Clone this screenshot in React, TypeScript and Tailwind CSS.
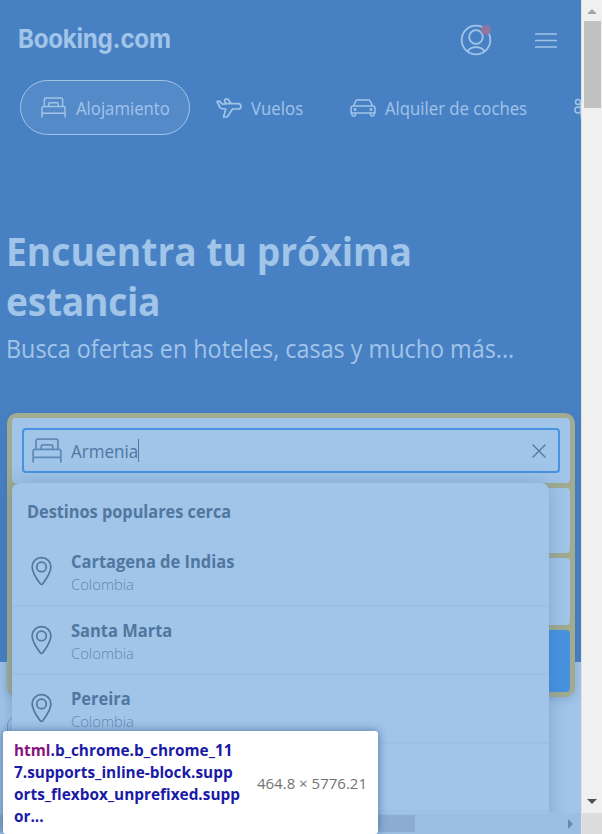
import React from "react";

const stroke = {
  fill: "none",
  stroke: "currentColor",
  strokeWidth: 1.5,
  strokeLinecap: "round" as const,
  strokeLinejoin: "round" as const,
};

function BedIcon({ className }: { className: string }) {
  return (
    <svg viewBox="0 0 26 22" preserveAspectRatio="none" className={className} {...stroke}>
      <path d="M1 21v-9.5Q1 10 2.500 10h21Q25 10 25 11.500V21M1 17h24M3.500 10V2.500Q3.500 1 5 1h16Q22.500 1 22.500 2.500V10M8 10V7.500Q8 6 9.500 6h7Q18 6 18 7.500V10" />
    </svg>
  );
}

function PlaneIcon() {
  return (
    <svg viewBox="0 0 26 20" className="h-5 w-[26px] shrink-0" {...stroke} strokeWidth={1.7}>
      <path d="M1 3.500l2-.5 3.500 3.200 5.200-.5H22q3 .2 3 2.800 0 2.500-3 2.500h-5.500l-4.800 7.200q-.5.8-1.500.8H7.500l2.300-8-3.600-.3Q5 10.500 4 9.500ZM9.500 5.700 8.700 2.500q-.2-1.300 1-1.300h1.600q.8 0 1.300.7l2.600 3.800" />
    </svg>
  );
}

function CarIcon() {
  return (
    <svg viewBox="0 0 26 18" className="h-[18px] w-[26px] shrink-0" {...stroke}>
      <path d="M3.500 7 5.800 2Q6.300 1 7.500 1h11q1.200 0 1.700 1l2.300 5M3.500 7h19q2.500 0 2.500 2.500V14H1V9.500Q1 7 3.500 7ZM2 14v2q0 1 1.700 1t1.700-1v-2M20.600 14v2q0 1 1.700 1t1.700-1v-2" />
      <circle cx="5" cy="10.500" r=".7" />
      <circle cx="21" cy="10.500" r=".7" />
    </svg>
  );
}

function PinIcon() {
  return (
    <svg viewBox="0 0 22 30" className="mt-[7px] h-[30px] w-[21px] shrink-0" {...stroke} strokeWidth={1.8}>
      <path d="M11 1C5.300 1 1.200 5.400 1.200 10.700c0 5.300 5.300 13.300 8.300 17.400q1.500 1.800 3 0c3-4.100 8.300-12.100 8.300-17.400C20.800 5.400 16.700 1 11 1Z" />
      <circle cx="11" cy="10.700" r="5" />
    </svg>
  );
}

const places = ["Cartagena de Indias", "Santa Marta", "Pereira"];

function Header() {
  return (
    <header className="flex h-20 items-start justify-between pr-6 pl-[18px]">
      <div className="mt-[21px] w-[151px] origin-left scale-x-[.93] font-[Inter] text-[26px] leading-9 font-bold tracking-[-0.3px]">
        Booking.com
      </div>
      <div className="mt-6 flex items-center gap-[43px]">
        <svg viewBox="0 0 32 32" className="h-8 w-8" {...stroke} strokeWidth={1.8}>
          <circle cx="16" cy="16" r="14.300" />
          <circle cx="16" cy="13" r="6.800" />
          <path d="M7.500 27.200c4-5.500 13-5.500 17 0" />
          <circle cx="26" cy="6" r="5" fill="#91759f" stroke="none" />
        </svg>
        <svg viewBox="0 0 22 16" className="h-4 w-[22px]" {...stroke} strokeWidth={1.3}>
          <path d="M.5 2h21M.5 8.500h21M.5 15h21" />
        </svg>
      </div>
    </header>
  );
}

function Tabs() {
  return (
    <nav className="flex h-[55px] items-center overflow-hidden pl-5 text-[18px] whitespace-nowrap">
      <div className="flex h-[55px] w-[170px] shrink-0 items-center rounded-full border border-[#a1c4e9] bg-[#558ac9] pl-5">
        <BedIcon className="h-[21px] w-[25px] shrink-0" />
        <span className="mt-0.5 ml-[10px] origin-left scale-x-[.93]">Alojamiento</span>
      </div>
      <div className="ml-[26px] flex w-[134px] shrink-0 items-center">
        <PlaneIcon />
        <span className="mt-0.5 ml-[9px] origin-left scale-x-[.935]">Vuelos</span>
      </div>
      <div className="flex w-[224px] shrink-0 items-center">
        <CarIcon />
        <span className="mt-0.5 ml-[9px] origin-left scale-x-[.93]">Alquiler de coches</span>
      </div>
      <svg viewBox="0 0 26 22" className="h-[22px] w-[26px] shrink-0" {...stroke}>
        <circle cx="4" cy="5" r="2.500" />
        <circle cx="4" cy="13" r="3" />
        <circle cx="12" cy="9" r="5.500" />
        <path d="M7 16v3M7 21v.1" />
      </svg>
    </nav>
  );
}

function Suggestions() {
  return (
    <section className="absolute top-[70px] left-[5px] z-10 h-[350px] w-[537px] rounded-t-lg bg-[#a1c4e9] text-[#4f779f] shadow-[0_0_18px_rgba(53,95,145,0.32)]">
      <h2 className="flex h-[55px] items-center pt-0.5 pl-[15px] text-[18px] font-bold whitespace-nowrap">
        <span className="origin-left scale-x-[.905]">Destinos populares cerca</span>
      </h2>
      {places.map((place) => (
        <div key={place} className="flex h-[68.500px] border-b-2 border-[#9cbfe4] pt-[11px] pl-[19px]">
          <PinIcon />
          <div className="ml-[19px]">
            <div className="flex h-6 text-[18px] leading-6 font-bold whitespace-nowrap">
              <span className="origin-left scale-x-[.915]">{place}</span>
            </div>
            <div className="text-[14.800px] leading-[23px] font-light text-[#5f86b0]">Colombia</div>
          </div>
        </div>
      ))}
      <div className="h-[68px] border-b-2 border-[#9cbfe4]" />
    </section>
  );
}

function SearchForm() {
  return (
    <div className="relative mt-[46px] ml-[7px] flex h-[284px] w-[568px] flex-col gap-[5px] rounded-[10px] bg-[#a0ab90] p-[5px] shadow-[0_2px_8px_rgba(53,95,145,0.25)]">
      <div className="h-[65px] rounded bg-[#a1c4e9] p-[10px]">
        <div className="flex h-[45px] items-center rounded border-2 border-[#4892df] pr-3 pl-2 text-[18px] text-[#4f779f]">
          <BedIcon className="h-[25px] w-[30px] text-[#5f89b6]" />
          <span className="mt-0.5 ml-[9px] w-[67px] origin-left scale-x-[.945] font-medium">Armenia</span>
          <span className="h-[23px] w-px bg-[#4f779f]" />
          <svg viewBox="0 0 14 14" className="ml-auto h-[14px] w-[14px]" {...stroke} strokeWidth={1.3}>
            <path d="m1 1 12 12M13 1 1 13" />
          </svg>
        </div>
      </div>
      <div className="h-[65px] rounded bg-[#a1c4e9]" />
      <div className="h-[67px] rounded bg-[#a1c4e9]" />
      <div className="h-[62px] rounded bg-[#4892df]" />
      <Suggestions />
    </div>
  );
}

function ElementTooltip() {
  return (
    <div className="absolute top-[731px] left-[3px] z-30 flex h-[103px] w-[375px] items-center rounded-[3px] bg-white pr-[11px] pl-[11px] shadow-[0_0_10px_rgba(40,75,120,0.65)]">
      <div className="w-[230px] origin-left scale-x-[.96] text-[16px] leading-[22px] font-bold whitespace-nowrap text-[#1a1aa6]">
        <div>
          <span className="text-[#881280]">html</span>.b_chrome.b_chrome_11
        </div>
        <div>7.supports_inline-block.supp</div>
        <div>orts_flexbox_unprefixed.supp</div>
        <div>or...</div>
      </div>
      <div className="mt-0.5 ml-auto text-[15px] whitespace-nowrap text-[#737373]">464.8 × 5776.21</div>
    </div>
  );
}

export default function App() {
  return (
    <div className="relative flex h-[834px] w-[602px] overflow-hidden bg-[#f0f0f0] font-['Open_Sans','Noto_Sans',sans-serif]">
      <main className="relative h-[834px] w-[581px] shrink-0 overflow-hidden bg-[linear-gradient(#4881c3_662px,#a1c4e9_662px)] text-[#a1c4e9]">
        <Header />
        <Tabs />
        <div className="mt-[91px] pl-1.5 whitespace-nowrap">
          <h1 className="origin-left scale-x-[.93] text-[40px] leading-[50px] font-bold">
            <div>Encuentra tu próxima</div>
            <div className="tracking-[-0.3px]">estancia</div>
          </h1>
          <p className="mt-[3px] origin-left scale-x-[.934] text-[25px] leading-[38px]">
            Busca ofertas en hoteles, casas y mucho más...
          </p>
        </div>
        <SearchForm />
        <div className="mt-5 ml-[7px] h-20 w-[500px] rounded-lg border border-[#779dc5]" />
        <div className="absolute bottom-0 left-0 z-20 flex h-[21px] w-full items-center bg-[#9bbee3]">
          <div className="h-[17px] w-[415px] bg-[#8badd2]" />
          <div className="mr-2 ml-auto border-y-[5px] border-l-[5px] border-y-transparent border-l-[#6488b0]" />
        </div>
      </main>
      <aside className="flex w-[21px] shrink-0 flex-col items-center border-l border-[#e2e2e2]">
        <div className="mt-[9px] border-x-[5px] border-b-[5px] border-x-transparent border-b-[#a3a3a3]" />
        <div className="mt-[7px] h-[87px] w-[17px] bg-[#c1c1c1]" />
        <div className="mt-auto mb-[9px] border-x-[5px] border-t-[5px] border-x-transparent border-t-[#505050]" />
        <div className="h-[21px] w-full bg-[#dcdcdc]" />
      </aside>
      <ElementTooltip />
    </div>
  );
}
